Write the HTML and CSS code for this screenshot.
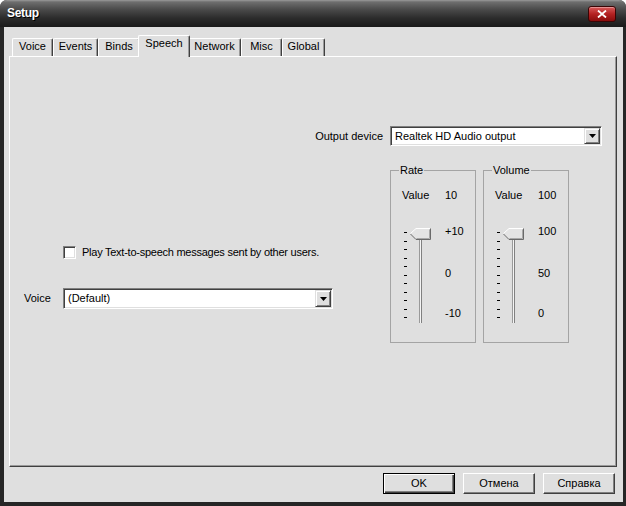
FILE: index.html
```html
<!DOCTYPE html>
<html>
<head>
<meta charset="utf-8">
<title>Setup</title>
<link rel="stylesheet" href="styles.css">
</head>
<body>
<div class="window">
  <div class="titlebar">
    <span class="title">Setup</span>
    <span class="close"><svg width="10" height="8" viewBox="0 0 10 8"><path d="M1 0.5 L9 7.5 M9 0.5 L1 7.5" stroke="#fff" stroke-width="1.8"/></svg></span>
  </div>
  <div class="client">
    <div class="tabs">
      <div class="tab tab-voice">Voice</div>
      <div class="tab tab-events">Events</div>
      <div class="tab tab-binds">Binds</div>
      <div class="tab tab-speech active">Speech</div>
      <div class="tab tab-network">Network</div>
      <div class="tab tab-misc">Misc</div>
      <div class="tab tab-global">Global</div>
    </div>
    <div class="panel">
      <div class="output-row">
        <span class="output-label">Output device</span>
        <div class="combo combo-out">
          <span class="combo-text">Realtek HD Audio output</span>
          <span class="drop"><svg width="7" height="4" viewBox="0 0 7 4"><polygon points="0,0 7,0 3.5,4" fill="#000"/></svg></span>
        </div>
      </div>
      <div class="main-row">
        <div class="left-col">
          <div class="check-row">
            <span class="checkbox"></span>
            <span class="check-label">Play Text-to-speech messages sent by other users.</span>
          </div>
          <div class="voice-row">
            <span class="voice-label">Voice</span>
            <div class="combo combo-voice">
              <span class="combo-text">(Default)</span>
              <span class="drop"><svg width="7" height="4" viewBox="0 0 7 4"><polygon points="0,0 7,0 3.5,4" fill="#000"/></svg></span>
            </div>
          </div>
        </div>
        <div class="groups">
          <fieldset class="group">
            <legend>Rate</legend>
            <div class="value-row"><span class="value-label">Value</span><span>10</span></div>
            <div class="slider">
              <div class="ticks"><i></i><i></i><i></i><i></i><i></i><i></i><i></i><i></i><i></i><i></i><i></i></div>
              <div class="thumb-col">
                <svg class="thumb" width="21" height="12" viewBox="0 0 21 12">
                  <polygon points="0.5,5.5 6,0.5 20.5,0.5 20.5,11.5 6,11.5" fill="#e4e4e4"/>
                  <path d="M0.5 5.5 L6 0.5 L20 0.5" stroke="#fff" fill="none"/>
                  <path d="M20.5 0.5 L20.5 11.5 L6 11.5 L0.5 6" stroke="#6a6a6a" fill="none"/>
                  <path d="M19.5 1.5 L19.5 10.5 L6.5 10.5" stroke="#a8a8a8" fill="none"/>
                </svg>
                <div class="track"></div>
              </div>
              <div class="scale"><span>+10</span><span class="mid">0</span><span class="low">-10</span></div>
            </div>
          </fieldset>
          <fieldset class="group">
            <legend>Volume</legend>
            <div class="value-row"><span class="value-label">Value</span><span>100</span></div>
            <div class="slider">
              <div class="ticks"><i></i><i></i><i></i><i></i><i></i><i></i><i></i><i></i><i></i><i></i><i></i></div>
              <div class="thumb-col">
                <svg class="thumb" width="21" height="12" viewBox="0 0 21 12">
                  <polygon points="0.5,5.5 6,0.5 20.5,0.5 20.5,11.5 6,11.5" fill="#e4e4e4"/>
                  <path d="M0.5 5.5 L6 0.5 L20 0.5" stroke="#fff" fill="none"/>
                  <path d="M20.5 0.5 L20.5 11.5 L6 11.5 L0.5 6" stroke="#6a6a6a" fill="none"/>
                  <path d="M19.5 1.5 L19.5 10.5 L6.5 10.5" stroke="#a8a8a8" fill="none"/>
                </svg>
                <div class="track"></div>
              </div>
              <div class="scale"><span>100</span><span class="mid">50</span><span class="low">0</span></div>
            </div>
          </fieldset>
        </div>
      </div>
    </div>
    <div class="buttons">
      <div class="btn btn-default">OK</div>
      <div class="btn">Отмена</div>
      <div class="btn">Справка</div>
    </div>
  </div>
</div>
</body>
</html>
```
FILE: styles.css
```css
* { box-sizing: border-box; }
html, body { margin: 0; padding: 0; background: #fff; }
body {
  font-family: "Liberation Sans", Arial, sans-serif;
  font-size: 11px;
  line-height: 13px;
  color: #000;
}
.window {
  width: 626px;
  height: 506px;
  display: flex;
  flex-direction: column;
  background: #262626;
  border-radius: 7px 7px 0 0;
  overflow: hidden;
}
.titlebar {
  height: 27px;
  flex: none;
  display: flex;
  align-items: center;
  justify-content: space-between;
  padding: 0 10px 0 7px;
  background: linear-gradient(#9a9a9a 0, #6e6e6e 2px, #4c4c4c 9px, #2c2c2c 18px, #1a1a1a 27px);
}
.title {
  color: #fff;
  font-weight: bold;
  font-size: 12px;
  letter-spacing: -0.3px;
  text-shadow: 1px 1px 0 #000;
}
.close {
  width: 28px;
  height: 16px;
  border: 1px solid #3a0505;
  border-radius: 3px;
  background: linear-gradient(#d85a5a, #b42222 50%, #8a0c0c);
  box-shadow: inset 0 1px 0 rgba(255,255,255,0.35);
  display: flex;
  align-items: center;
  justify-content: center;
}
.client {
  flex: 1;
  margin: 0 3px 4px 4px;
  background: #dfdfdf;
  display: flex;
  flex-direction: column;
}
.tabs {
  display: flex;
  align-items: flex-end;
  height: 21px;
  margin-top: 8px;
  padding-left: 8px;
  flex: none;
}
.tab {
  height: 18px;
  display: flex;
  align-items: center;
  justify-content: center;
  padding-bottom: 2px;
  border-top: 1px solid #fff;
  border-left: 1px solid #fff;
  border-right: 1px solid #404040;
  box-shadow: inset -1px 0 0 #9a9a9a;
  border-radius: 2px 2px 0 0;
  background: #dfdfdf;
}
.tab-voice { width: 41px; }
.tab-events { width: 45px; }
.tab-binds { width: 42px; }
.tab-network { width: 53px; }
.tab-misc { width: 41px; }
.tab-global { width: 43px; }
.tab.active {
  width: 52px;
  height: 22px;
  margin: 0 -2px -1px -2px;
  padding-bottom: 6px;
  position: relative;
  z-index: 1;
}
.panel {
  flex: none;
  margin-left: 5px;
  width: 608px;
  height: 411px;
  border-top: 1px solid #fff;
  border-left: 1px solid #fff;
  border-right: 1px solid #404040;
  border-bottom: 1px solid #404040;
  box-shadow: inset -1px -1px 0 #9a9a9a;
}
.output-row {
  display: flex;
  justify-content: flex-end;
  align-items: center;
  margin-top: 69px;
  padding-right: 14px;
}
.output-label { margin-right: 7px; }
.combo {
  display: flex;
  background: #fff;
  border: 1px solid;
  border-color: #808080 #fff #fff #808080;
  box-shadow: inset 1px 1px 0 #404040, inset -1px -1px 0 #dfdfdf;
  padding: 1px;
}
.combo-out { width: 212px; height: 20px; }
.combo-voice { width: 270px; height: 21px; }
.combo-text {
  flex: 1;
  display: flex;
  align-items: center;
  padding-left: 3px;
}
.drop {
  width: 16px;
  background: #dfdfdf;
  border: 1px solid;
  border-color: #dfdfdf #404040 #404040 #dfdfdf;
  box-shadow: inset 1px 1px 0 #fff, inset -1px -1px 0 #808080;
  display: flex;
  align-items: center;
  justify-content: center;
}
.main-row {
  display: flex;
  margin-top: 18px;
}
.left-col { flex: 1; }
.check-row {
  display: flex;
  align-items: center;
  margin-top: 81px;
  margin-left: 53px;
}
.checkbox {
  width: 13px;
  height: 13px;
  background: #fff;
  border: 1px solid;
  border-color: #808080 #fff #fff #808080;
  box-shadow: inset 1px 1px 0 #404040, inset -1px -1px 0 #dfdfdf;
  margin-right: 6px;
}
.check-label { letter-spacing: -0.25px; padding-top: 1px; }
.voice-row {
  display: flex;
  align-items: center;
  margin-top: 29px;
  margin-left: 14px;
}
.voice-label { width: 39px; }
.groups {
  display: flex;
  gap: 7px;
  margin-right: 47px;
}
.group {
  margin: 0;
  padding: 0 0 19px 0;
  width: 86px;
  min-width: 0;
  border: 1px solid #a4a4a4;
}
.group legend {
  margin-left: 8px;
  padding: 0 1px;
  line-height: 13px;
}
.value-row {
  display: flex;
  margin-top: 12px;
  padding-left: 11px;
}
.value-label { width: 43px; }
.slider {
  display: flex;
  align-items: flex-start;
  margin-top: 26px;
}
.ticks {
  margin-left: 13px;
  margin-top: 4px;
  width: 3px;
  height: 86px;
  display: flex;
  flex-direction: column;
  justify-content: space-between;
}
.ticks i {
  display: block;
  height: 1px;
  background: #000;
}
.thumb-col {
  margin-left: 3px;
  width: 21px;
  display: flex;
  flex-direction: column;
}
.thumb { display: block; }
.track {
  margin-left: 9px;
  width: 3px;
  height: 83px;
  border-left: 1px solid #9a9a9a;
  border-right: 1px solid #808080;
  background: #f4f4f4;
}
.scale {
  margin-left: 14px;
  margin-top: -3px;
  display: flex;
  flex-direction: column;
}
.scale .mid { margin-top: 29px; }
.scale .low { margin-top: 27px; }
.buttons {
  display: flex;
  justify-content: flex-end;
  gap: 8px;
  margin-top: 6px;
  padding-right: 8px;
}
.btn {
  width: 72px;
  height: 21px;
  display: flex;
  align-items: center;
  justify-content: center;
  border: 1px solid;
  border-color: #fff #404040 #404040 #fff;
  box-shadow: inset -1px -1px 0 #808080;
}
.btn-default {
  border: 1px solid #000;
  box-shadow: inset 1px 1px 0 #fff, inset -1px -1px 0 #404040, inset -2px -2px 0 #808080;
}
```
